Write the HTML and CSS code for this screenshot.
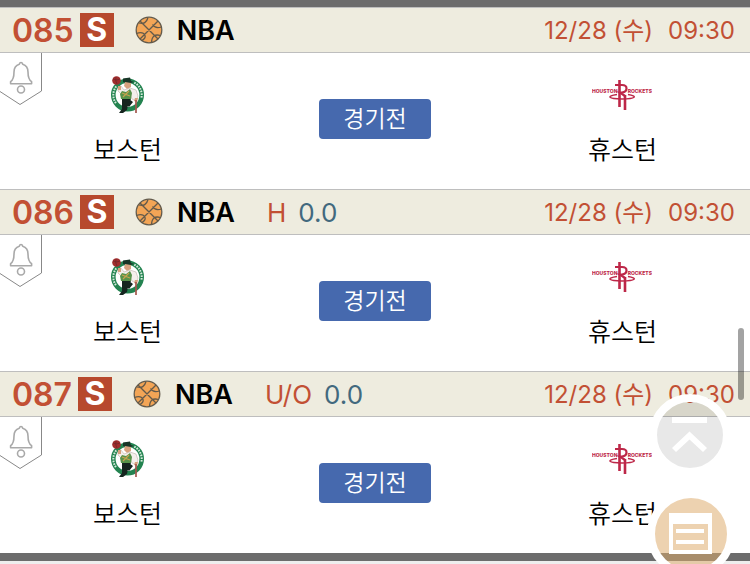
FILE: index.html
```
<!DOCTYPE html>
<html lang="ko">
<head>
<meta charset="utf-8">
<meta name="viewport" content="width=device-width, initial-scale=1">
<title>NBA</title>
<link rel="stylesheet" href="styles.css">
</head>
<body>
<svg class="defs" aria-hidden="true">
  <symbol id="ball" viewBox="0 0 28 28">
    <circle cx="14" cy="14" r="12.6" fill="#f3a556"/>
    <g fill="none" stroke="#635a4b" stroke-width="1.300">
      <circle cx="14" cy="14" r="12.800"/>
      <path d="M5 5 23 23M23 5 5 23M4 7Q11 9 13 1.500M26.500 11Q20 13 17.500 8.500M1.500 17.500Q8 15 10 19.500Q11 22 7 24.500M25.500 19.500Q17 17 16.500 26.500"/>
    </g>
  </symbol>
  <symbol id="ribbon" viewBox="0 0 42 53">
    <path d="M41.500 0V38L20 51.500 0 38.500" fill="none" stroke="#888" stroke-width="1"/>
    <g fill="none" stroke="#a9a9a9" stroke-width="1.600" stroke-linejoin="round">
      <path d="M21 9.500C19.800 9.500 19.500 10.500 19.300 11.300C15.500 12.500 14 15.500 14 19C14 25 13 27 10.600 28.700V30.700H31.600V28.700C29 27 28 25 28 19C28 15.500 26.500 12.500 22.700 11.300C22.500 10.500 22.200 9.500 21 9.500Z"/>
      <circle cx="21" cy="36.500" r="3.500"/>
    </g>
  </symbol>
  <symbol id="celtics" viewBox="0 0 36 38">
    <circle cx="18.500" cy="19" r="14.200" fill="#fff" stroke="#238350" stroke-width="4.600"/>
    <circle cx="18.500" cy="19" r="14.200" fill="none" stroke="#d5eadb" stroke-width="2" stroke-dasharray="1.600 1.100 1.600 1.100 1.600 1.100 1.600 1.100 1.600 1.100 1.600 1.100 1.600 20 1.600 1.100 1.600 1.100 1.600 1.100 1.600 1.100 1.600 1.100 1.600 1.100 1.600 35" transform="rotate(145 18.500 19)"/>
    <path d="M14 2.500 21 1.500 22 5 25 6 20 7.500 14 6Z" fill="#183527"/>
    <path d="M16 6 22 7 22 11 18 13 15 10Z" fill="#d7a17e"/>
    <path d="M9 11 12 10 15 14 21 12 27 14 29 20 27 25 23 23 20 17 13 19 9 15Z" fill="#f4efec" stroke="#b4a79f" stroke-width=".5"/>
    <path d="M9 10 12 10 12 14 9 14ZM26 22 29 22 28 26 25 25Z" fill="#d6a17d"/>
    <path d="M13 15 17 16 21 13 23 17 22 23 12 23 11 18Z" fill="#57934a"/>
    <path d="M13 17 21 20M14 21 20 15" stroke="#c7a24f" stroke-width="1.200"/>
    <path d="M13 23H22L19 29 18 34 14 37 10 37 13 33ZM20 23 24 26 20 31 16 27Z" fill="#15251f"/>
    <path d="M27 24V37" stroke="#a4574e" stroke-width="1.700"/>
    <circle cx="7.500" cy="4.500" r="4.300" fill="#a12d2d"/>
    <path d="M4 3Q8 5 11 3M7 1Q6 5 8 8" fill="none" stroke="#672629" stroke-width=".7"/>
  </symbol>
  <symbol id="rockets" viewBox="0 0 60 34">
    <g class="wordmark">
      <text x="0" y="15">HOUSTON</text>
      <text x="60" y="15" text-anchor="end">ROCKETS</text>
    </g>
    <g fill="none" stroke="#bd2748">
      <path d="M27.500 2V29M33 17V32" stroke-width="2.600"/>
      <path d="M23 7H30Q34.500 7 34.500 10.500T30 14.500H28L33 18" stroke-width="2.200"/>
      <path d="M25 16.500C14 18 16 21 30 21S46 18 36 16.500" stroke-width="1.500"/>
    </g>
  </symbol>
</svg>

<main class="games">
  <article class="game">
    <header class="head">
      <span class="num">085</span><span class="badge">S</span>
      <svg class="ball"><use href="#ball"/></svg>
      <h2 class="league">NBA</h2>
      <time class="when"><span>12/28 (수)</span><span>09:30</span></time>
    </header>
    <div class="match">
      <button class="alarm" type="button" aria-label="알림"><svg><use href="#ribbon"/></svg></button>
      <div class="team"><svg class="celtics"><use href="#celtics"/></svg><span>보스턴</span></div>
      <button class="status" type="button">경기전</button>
      <div class="team"><svg class="rockets"><use href="#rockets"/></svg><span>휴스턴</span></div>
    </div>
  </article>
  <article class="game">
    <header class="head">
      <span class="num">086</span><span class="badge">S</span>
      <svg class="ball"><use href="#ball"/></svg>
      <h2 class="league">NBA</h2>
      <span class="line"><span class="kind">H</span><span>0.0</span></span>
      <time class="when"><span>12/28 (수)</span><span>09:30</span></time>
    </header>
    <div class="match">
      <button class="alarm" type="button" aria-label="알림"><svg><use href="#ribbon"/></svg></button>
      <div class="team"><svg class="celtics"><use href="#celtics"/></svg><span>보스턴</span></div>
      <button class="status" type="button">경기전</button>
      <div class="team"><svg class="rockets"><use href="#rockets"/></svg><span>휴스턴</span></div>
    </div>
  </article>
  <article class="game">
    <header class="head">
      <span class="num">087</span><span class="badge">S</span>
      <svg class="ball"><use href="#ball"/></svg>
      <h2 class="league">NBA</h2>
      <span class="line"><span class="kind">U/O</span><span>0.0</span></span>
      <time class="when"><span>12/28 (수)</span><span>09:30</span></time>
    </header>
    <div class="match">
      <button class="alarm" type="button" aria-label="알림"><svg><use href="#ribbon"/></svg></button>
      <div class="team"><svg class="celtics"><use href="#celtics"/></svg><span>보스턴</span></div>
      <button class="status" type="button">경기전</button>
      <div class="team"><svg class="rockets"><use href="#rockets"/></svg><span>휴스턴</span></div>
    </div>
  </article>
</main>

<div class="thumb"></div>
<nav class="floating">
  <button class="fab top" type="button" aria-label="맨 위로">
    <svg viewBox="0 0 66 66"><path d="M15 15H50V21H15ZM15 46 32.500 29.500 50 46 46 50 32.500 37.500 19 50Z" fill="#fff"/></svg>
  </button>
  <button class="fab list" type="button" aria-label="목록">
    <svg viewBox="0 0 72 72"><path fill="#fff" fill-rule="evenodd" d="M14 15H57V56H14ZM18 26V52H53V26Z"/><path fill="#fff" d="M21 31H49V35H21ZM21 42H49V46H21Z"/></svg>
  </button>
</nav>
</body>
</html>
```

FILE: styles.css
```
* {
  box-sizing: border-box;
}

html {
  overflow: hidden;
}

body {
  margin: 0;
  background: #eee;
  font-family: Inter, "Noto Sans CJK KR", sans-serif;
  color: #000;
}

button {
  padding: 0;
  border: 0;
  background: none;
  font: inherit;
}

svg {
  display: block;
}

.defs {
  position: absolute;
  width: 0;
  height: 0;
}

.games {
  border-top: 7px solid #6c6c6c;
  border-bottom: 8px solid #6c6c6c;
  box-shadow: 0 1px #ccc;
}

.game {
  background: #fff;
}

.head {
  display: flex;
  align-items: center;
  height: 46px;
  padding: 0 15px 0 12px;
  border-top: 1px solid #bebebe;
  border-bottom: 1px solid #bebebe;
  background: #eeecdf;
  color: #c25034;
  line-height: 40px;
}

.num,
.league,
.line,
.when {
  padding-top: 2px;
}

.num {
  font-size: 32px;
  font-weight: 600;
}

.badge {
  width: 34px;
  height: 34px;
  margin-left: 6px;
  background: #b7492d;
  color: #fff;
  font-size: 32px;
  font-weight: 700;
  line-height: 34px;
  text-align: center;
}

.ball {
  width: 28px;
  height: 28px;
  margin-left: 21px;
}

.league {
  margin: 0 0 0 14px;
  color: #000;
  font-size: 27px;
  font-weight: 600;
}

.line {
  display: flex;
  gap: 12px;
  margin-left: 32px;
  color: #42697e;
  font-size: 26px;
  font-weight: 400;
}

.kind {
  color: #c25034;
}

.when {
  display: flex;
  align-items: baseline;
  gap: 15px;
  margin-left: auto;
  font-size: 24px;
}

.match {
  position: relative;
  display: grid;
  grid-template-columns: 34% 32% 34%;
  place-items: center;
  height: 136px;
  padding-bottom: 4px;
}

.alarm {
  position: absolute;
  top: 0;
  left: 0;
}

.alarm svg {
  width: 42px;
  height: 53px;
}

.team {
  display: flex;
  flex-direction: column;
  align-items: center;
  gap: 18px;
  padding-top: 6px;
  font-size: 25px;
  font-weight: 350;
  line-height: 36px;
}

.celtics {
  width: 36px;
  height: 38px;
}

.rockets {
  width: 60px;
  height: 38px;
}

.wordmark {
  fill: #bd2748;
  font-size: 5px;
  font-weight: 800;
}

.status {
  width: 112px;
  height: 40px;
  border-radius: 4px;
  background: #4669ae;
  color: #fff;
  font-size: 23px;
  font-weight: 350;
  line-height: 36px;
}

.thumb {
  position: fixed;
  top: 328px;
  right: 6px;
  width: 6px;
  height: 72px;
  border-radius: 3px;
  background: rgb(0 0 0 / 36%);
}

.floating {
  position: fixed;
  top: 394px;
  right: 15px;
  display: flex;
  flex-direction: column;
  align-items: flex-end;
  gap: 14px;
}

.fab {
  border: 8px solid #fff;
  border-radius: 50%;
}

.top {
  width: 82px;
  height: 82px;
  margin-right: 4px;
  background: rgb(0 0 0 / 9%);
}

.list {
  width: 88px;
  height: 88px;
  background: rgb(221 170 106 / 53%);
}
```
